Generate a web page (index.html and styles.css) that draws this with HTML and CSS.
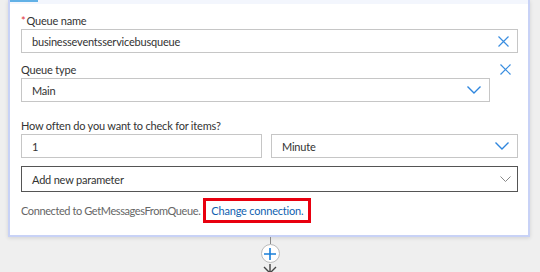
FILE: index.html
```html
<!DOCTYPE html>
<html lang="en">
<head>
    <meta charset="UTF-8">
    <title>Queue trigger</title>
    <link rel="stylesheet" href="styles.css">
</head>
<body>

    <div class="card">
        <div class="card-top"><span class="tab"></span></div>

        <div class="field">
            <label><span class="req">*</span>Queue name</label>
            <div class="box">
                <span class="value">businesseventsservicebusqueue</span>
                <svg class="icon-x" width="11" height="11" viewBox="0 0 11 11"><path d="M0.5 0.5 L10.5 10.5 M10.5 0.5 L0.5 10.5" stroke="#3a8ee0" stroke-width="1.2" fill="none"/></svg>
            </div>
        </div>

        <div class="field row-remove">
            <div class="grow">
                <label>Queue type</label>
                <div class="box">
                    <span class="value">Main</span>
                    <svg class="chev" width="14" height="8" viewBox="0 0 14 8"><path d="M0.5 0.5 L7 7 L13.5 0.5" stroke="#2f86de" stroke-width="1.4" fill="none"/></svg>
                </div>
            </div>
            <div class="remove">
                <svg width="11" height="11" viewBox="0 0 11 11"><path d="M0.5 0.5 L10.5 10.5 M10.5 0.5 L0.5 10.5" stroke="#3a8ee0" stroke-width="1.2" fill="none"/></svg>
            </div>
        </div>

        <div class="field recurrence">
            <label>How often do you want to check for items?</label>
            <div class="pair">
                <div class="box"><span class="value">1</span></div>
                <div class="box">
                    <span class="value">Minute</span>
                    <svg class="chev" width="14" height="8" viewBox="0 0 14 8"><path d="M0.5 0.5 L7 7 L13.5 0.5" stroke="#2f86de" stroke-width="1.4" fill="none"/></svg>
                </div>
            </div>
        </div>

        <div class="box add-param">
            <span class="value">Add new parameter</span>
            <svg class="chev" width="11" height="7" viewBox="0 0 11 7"><path d="M0.5 0.5 L5.5 5.5 L10.5 0.5" stroke="#888" stroke-width="1" fill="none"/></svg>
        </div>

        <div class="connection">
            Connected to GetMessagesFromQueue.
            <a class="change" href="#">Change connection.</a>
        </div>
    </div>

    <div class="connector">
        <span class="line"></span>
        <span class="plus">
            <svg width="12" height="12" viewBox="0 0 12 12"><path d="M6 0 V12 M0 6 H12" stroke="#1a7fd9" stroke-width="1.6"/></svg>
        </span>
        <svg class="arrow" width="14" height="10" viewBox="0 0 14 10"><path d="M7 0 V9 M1 3 L7 9 L13 3" stroke="#444" stroke-width="1.4" fill="none"/></svg>
    </div>

</body>
</html>
```

FILE: styles.css
```css
body {
    margin: 0;
    background-color: #efefef;
    font-family: "Lato", "Open Sans", sans-serif;
    font-size: 11px;
    letter-spacing: -0.2px;
    color: #333;
}
.card {
    width: 522px;
    box-sizing: border-box;
    margin-left: 8px;
    background-color: #fff;
    border: 2px solid #c8d2f6;
    border-top: none;
    box-shadow: 0 1px 4px rgba(0, 0, 0, 0.12);
    padding: 0 10px 12px 11px;
}
.card-top {
    height: 4px;
    margin: 0 -10px 0 -11px;
    background-color: #f3f6fd;
}
.tab {
    display: block;
    width: 28px;
    height: 2px;
    background-color: #62b1e6;
}
.field {
    margin-top: 9px;
}
.recurrence {
    margin-top: 16px;
}
label {
    display: block;
    line-height: 15px;
    margin-bottom: 1px;
}
.req {
    color: #e0323c;
    margin-right: 1px;
}
.box {
    display: flex;
    align-items: center;
    height: 24px;
    border: 1px solid #c6c6c6;
    padding: 0 8px 0 10px;
    box-sizing: border-box;
}
.value {
    flex: 1;
}
.row-remove {
    display: flex;
}
.grow {
    flex: 1;
}
.remove {
    width: 28px;
    display: flex;
    justify-content: flex-end;
    padding: 2px 7px 0 0;
    box-sizing: border-box;
}
.pair {
    display: flex;
    gap: 9px;
}
.pair .box:first-child {
    width: 241px;
}
.pair .box:last-child {
    flex: 1;
}
.add-param {
    height: 26px;
    margin-top: 8px;
    border-color: #555;
    padding-right: 6px;
}
.connection {
    margin-top: 6px;
    color: #666;
    letter-spacing: -0.4px;
    display: flex;
    align-items: center;
    gap: 3px;
}
.change {
    color: #0f5fb0;
    letter-spacing: -0.2px;
    text-decoration: none;
    border: 3px solid #e8000f;
    padding: 3px 5px;
}
.connector {
    width: 540px;
    display: flex;
    flex-direction: column;
    align-items: center;
}
.line {
    width: 1px;
    height: 7px;
    background-color: #888;
}
.plus {
    width: 19px;
    height: 19px;
    border-radius: 50%;
    background-color: #fff;
    border: 1px solid #bbb;
    box-sizing: border-box;
    display: flex;
    align-items: center;
    justify-content: center;
}
.arrow {
    margin-top: 1px;
}
```
